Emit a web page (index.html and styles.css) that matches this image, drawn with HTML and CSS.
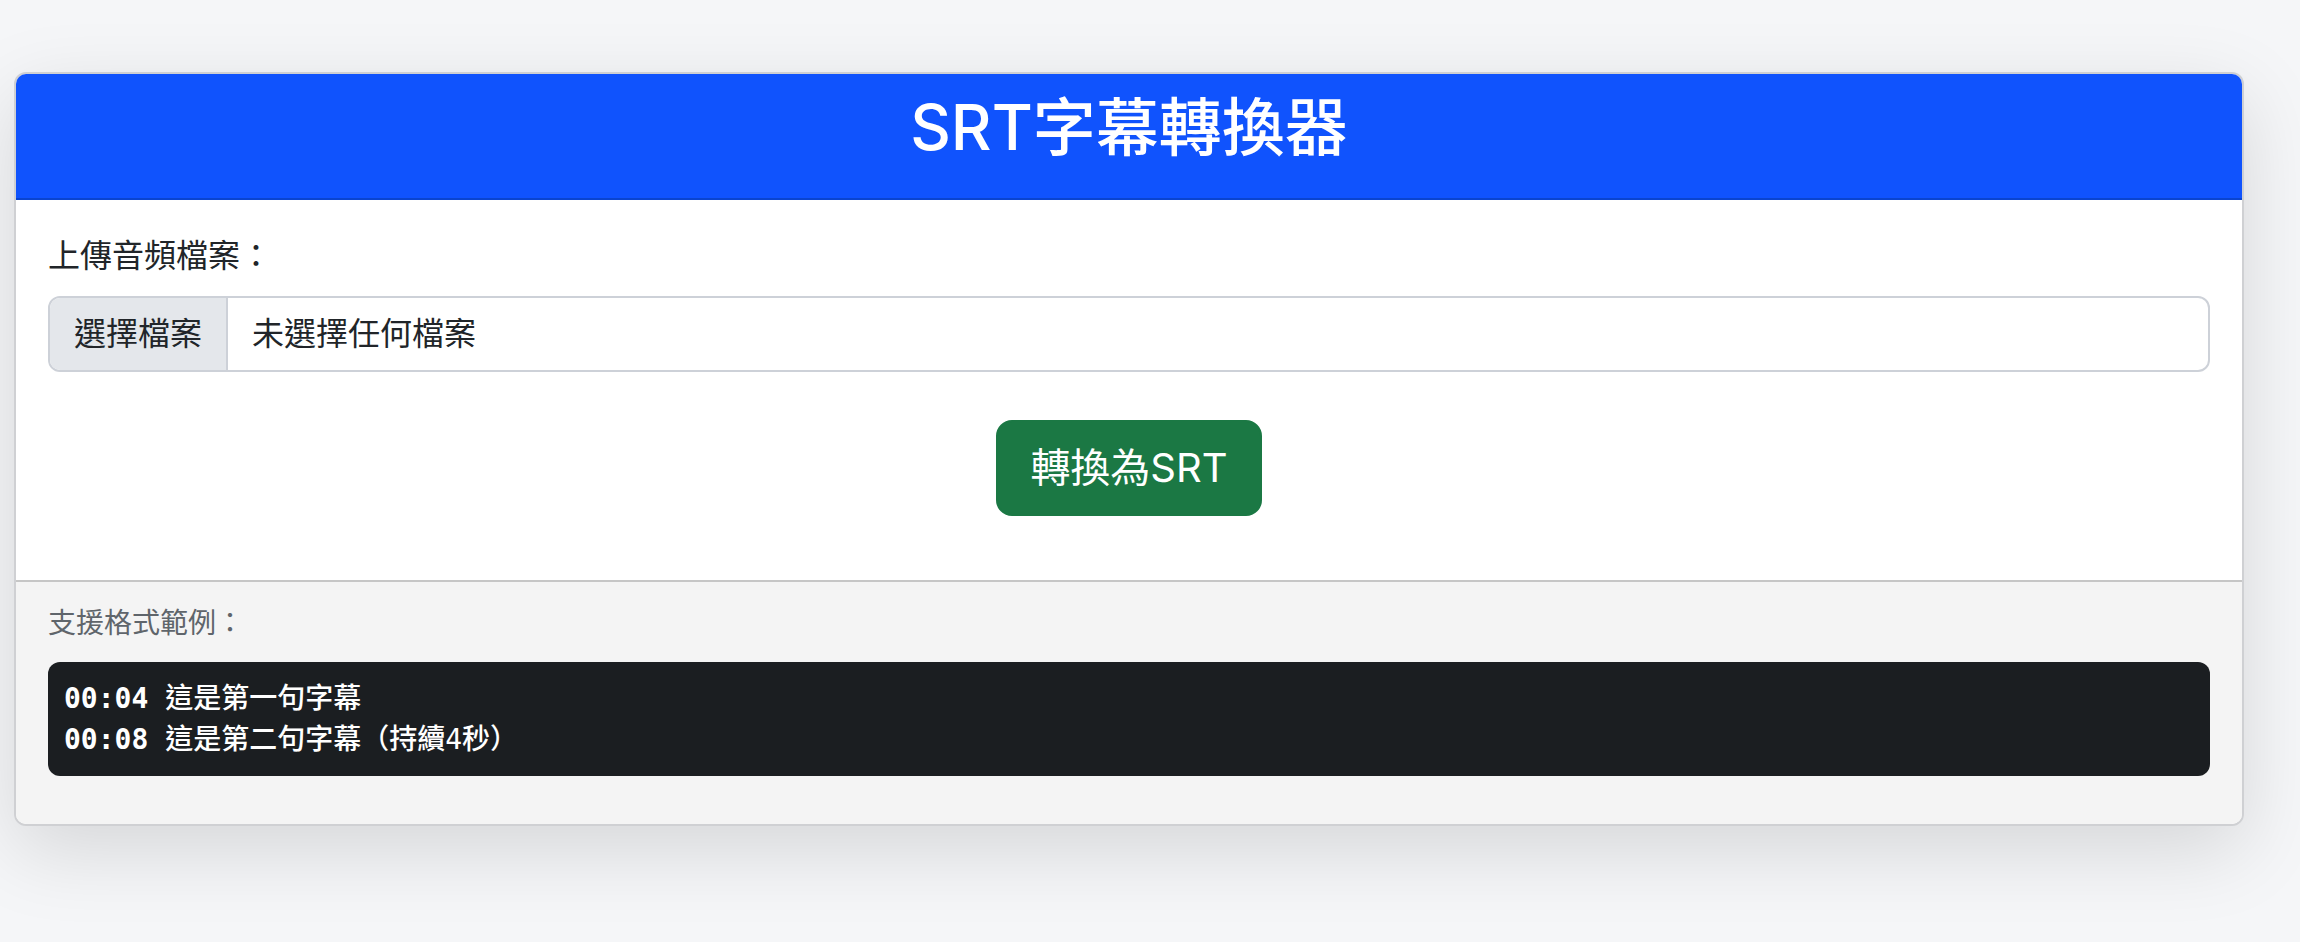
FILE: index.html
```html
<!DOCTYPE html>
<html lang="zh-Hant">
<head>
<meta charset="utf-8">
<title>SRT字幕轉換器</title>
<link rel="stylesheet" href="styles.css">
</head>
<body>
<div class="page">
  <div class="card">
    <div class="card-header">
      <h2 class="title">SRT字幕轉換器</h2>
    </div>
    <div class="card-body">
      <div class="form-group">
        <label class="label">上傳音頻檔案：</label>
        <div class="file-input">
          <span class="file-btn">選擇檔案</span>
          <span class="file-name">未選擇任何檔案</span>
        </div>
      </div>
      <div class="actions">
        <button class="btn-convert" type="button">轉換為SRT</button>
      </div>
    </div>
    <div class="card-footer">
      <p class="hint"><small class="hint-text">支援格式範例：</small></p>
      <pre class="sample"><span class="ts">00:04</span> 這是第一句字幕
<span class="ts">00:08</span> 這是第二句字幕（持續4秒）</pre>
    </div>
  </div>
</div>
</body>
</html>
```
FILE: styles.css
```css
html, body {
  margin: 0;
  padding: 0;
}
html {
  background: #f5f6f8;
}
body {
  background: #f5f6f8;
  font-family: Inter, "Noto Sans CJK TC", sans-serif;
  font-size: 32px;
  line-height: 1.5;
  color: #212529;
}
.page {
  box-sizing: border-box;
  min-height: 942px;
  padding: 72px 56px 0 14px;
}
.card {
  background: #fff;
  border: 2px solid #cfd0d3;
  border-radius: 12px;
  box-shadow: 0 24px 80px rgba(0, 0, 0, 0.13);
  overflow: hidden;
}
.card-header {
  background: #1053fd;
  border-bottom: 2px solid #0a44cf;
  padding: 16px 32px;
  text-align: center;
}
.title {
  margin: 0 0 16px;
  font-size: 63px;
  font-weight: 500;
  line-height: 1.2;
  color: #fff;
}
.card-body {
  padding: 32px;
}
.form-group {
  margin-bottom: 48px;
}
.label {
  display: block;
  margin-bottom: 16px;
}
.file-input {
  display: flex;
  border: 2px solid #cdd1d8;
  border-radius: 12px;
  overflow: hidden;
}
.file-btn {
  background: #e4e7eb;
  padding: 12px 24px;
  border-right: 2px solid #cdd1d8;
}
.file-name {
  padding: 12px 24px;
}
.actions {
  display: flex;
  justify-content: center;
  margin-bottom: 32px;
}
.btn-convert {
  background: #1b7844;
  color: #fff;
  border: 2px solid #1b7844;
  border-radius: 16px;
  padding: 16px 32px;
  font-family: Inter, "Noto Sans CJK TC", sans-serif;
  font-size: 40px;
  line-height: 1.5;
}
.card-footer {
  background: #f4f4f4;
  border-top: 2px solid #c6c6c6;
  padding: 16px 32px;
}
.hint {
  margin: 0 0 16px;
}
.hint-text {
  font-size: 28px;
  color: #5f656b;
}
.sample {
  margin: 0 0 32px;
  padding: 16px;
  background: #1b1e21;
  color: #fff;
  border-radius: 12px;
  font-family: "DejaVu Sans Mono", "Noto Sans CJK TC", monospace;
  font-size: 28px;
  font-weight: 500;
  line-height: 41px;
}
.ts {
  font-weight: 700;
}
```
